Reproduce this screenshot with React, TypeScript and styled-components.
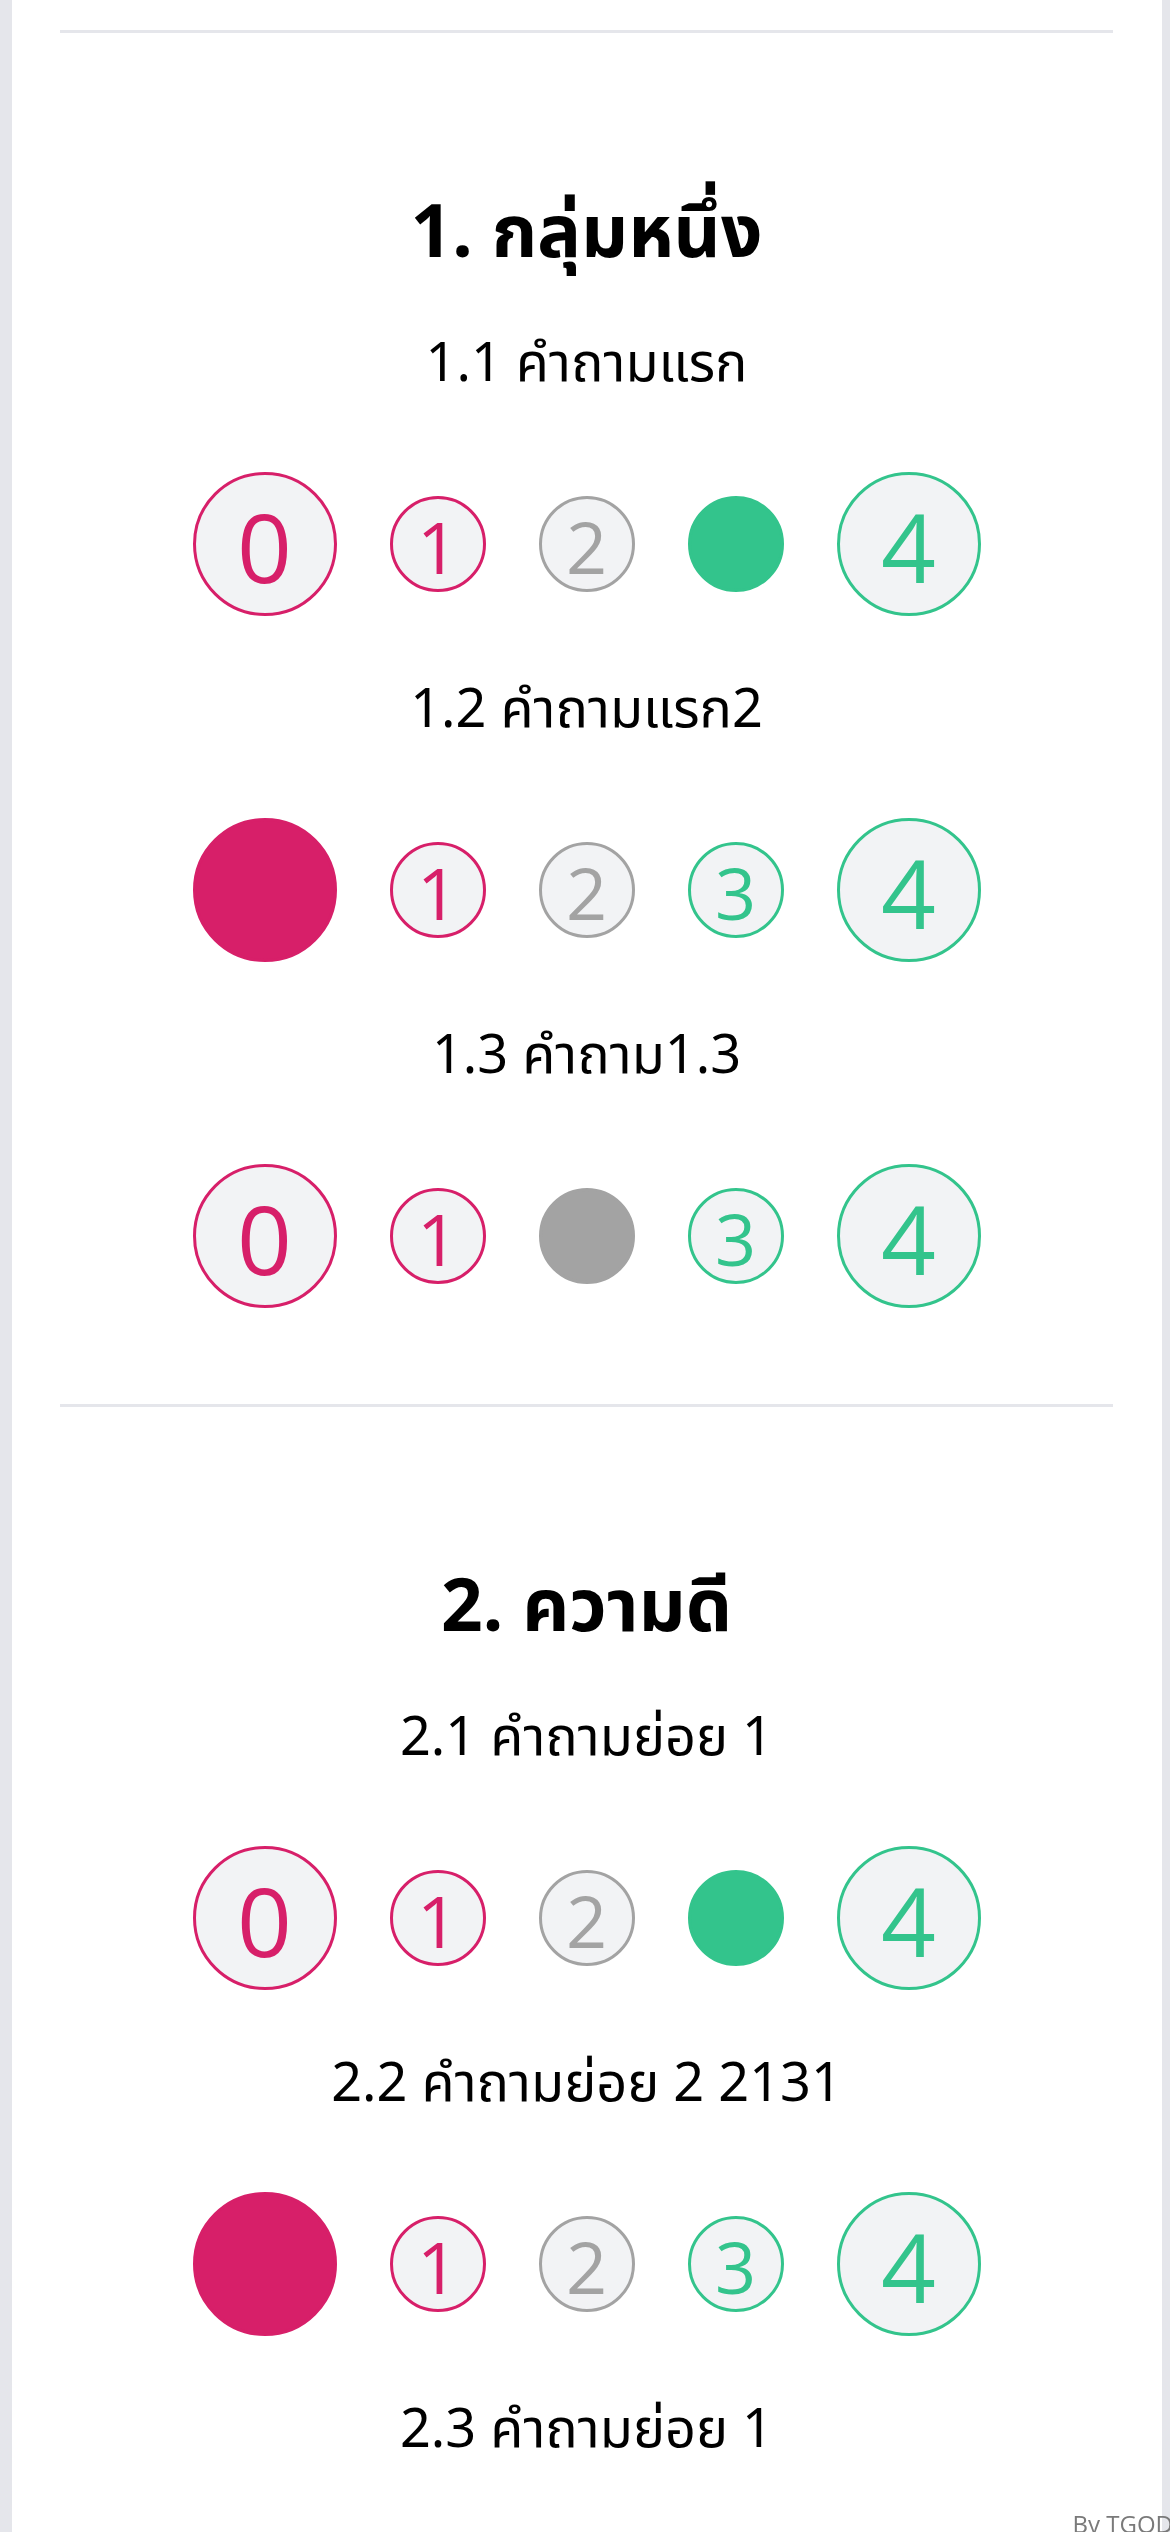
import React from "react";
import styled, { createGlobalStyle } from "styled-components";

const GlobalStyle = createGlobalStyle`
  html, body {
    margin: 0;
    padding: 0;
    background: #e5e6eb;
  }
  body {
    font-family: "Noto Sans", "Noto Sans Thai", "Leelawadee UI", "Open Sans", sans-serif;
    color: #000;
  }
`;

const Page = styled.div`
  min-height: 100vh;
  padding: 0 8px 0 12px;
  box-sizing: border-box;
  display: flex;
`;

const Card = styled.main`
  flex: 1;
  background: #ffffff;
  padding: 30px 49px 0 48px;
  min-height: 100vh;
  box-sizing: border-box;
`;

const Section = styled.section`
  border-top: 3px solid #e5e6eb;
  padding: 142px 0 51px;
  display: flex;
  flex-direction: column;
  align-items: center;
`;

const GroupTitle = styled.h2`
  margin: 0 0 32px;
  font-size: 73px;
  line-height: 108px;
  font-weight: 700;
  text-align: center;
`;

const Question = styled.p`
  margin: 0 0 67px;
  font-size: 54px;
  line-height: 90px;
  font-weight: 400;
  text-align: center;
`;

const Scale = styled.div`
  display: flex;
  align-items: center;
  justify-content: center;
  gap: 53px;
  margin-bottom: 45px;
`;

type Tone = "pink" | "gray" | "green";

const toneColor: Record<Tone, string> = {
  pink: "#d71f69",
  gray: "#a3a3a3",
  green: "#33c48c",
};

const Choice = styled.div<{ $large: boolean; $tone: Tone; $selected: boolean }>`
  width: ${(p) => (p.$large ? 144 : 96)}px;
  height: ${(p) => (p.$large ? 144 : 96)}px;
  box-sizing: border-box;
  border-radius: 50%;
  border: 3px solid ${(p) => toneColor[p.$tone]};
  background: ${(p) => (p.$selected ? toneColor[p.$tone] : "#f2f3f5")};
  color: ${(p) => (p.$selected ? "transparent" : toneColor[p.$tone])};
  display: flex;
  align-items: center;
  justify-content: center;
  font-family: "Open Sans", "Noto Sans", sans-serif;
  font-weight: 400;
  font-size: ${(p) => (p.$large ? 96 : 72)}px;
  line-height: 1;
  padding-top: ${(p) => (p.$large ? 4 : 3)}px;
  cursor: pointer;
`;

const Credit = styled.div`
  position: fixed;
  right: -3px;
  bottom: -6px;
  font-family: "Open Sans", "Noto Sans", sans-serif;
  font-size: 24px;
  line-height: 28px;
  color: #7a7a7a;
`;

const tones: Tone[] = ["pink", "pink", "gray", "green", "green"];

type Q = { label: string; selected?: number; hideScale?: boolean };
type Group = { title: string; questions: Q[] };

const groups: Group[] = [
  {
    title: "1. กลุ่มหนึ่ง",
    questions: [
      { label: "1.1 คำถามแรก", selected: 3 },
      { label: "1.2 คำถามแรก2", selected: 0 },
      { label: "1.3 คำถาม1.3", selected: 2 },
    ],
  },
  {
    title: "2. ความดี",
    questions: [
      { label: "2.1 คำถามย่อย 1", selected: 3 },
      { label: "2.2 คำถามย่อย 2 2131", selected: 0 },
      { label: "2.3 คำถามย่อย 1", hideScale: true },
    ],
  },
];

function RatingScale({ selected }: { selected?: number }) {
  return (
    <Scale>
      {tones.map((tone, i) => (
        <Choice
          key={i}
          $large={i === 0 || i === 4}
          $tone={tone}
          $selected={selected === i}
        >
          {i}
        </Choice>
      ))}
    </Scale>
  );
}

export default function App() {
  return (
    <>
      <GlobalStyle />
      <Page>
        <Card>
          {groups.map((g) => (
            <Section key={g.title}>
              <GroupTitle>{g.title}</GroupTitle>
              {g.questions.map((q) => (
                <React.Fragment key={q.label}>
                  <Question>{q.label}</Question>
                  {!q.hideScale && <RatingScale selected={q.selected} />}
                </React.Fragment>
              ))}
            </Section>
          ))}
        </Card>
      </Page>
      <Credit>By TGOD</Credit>
    </>
  );
}
